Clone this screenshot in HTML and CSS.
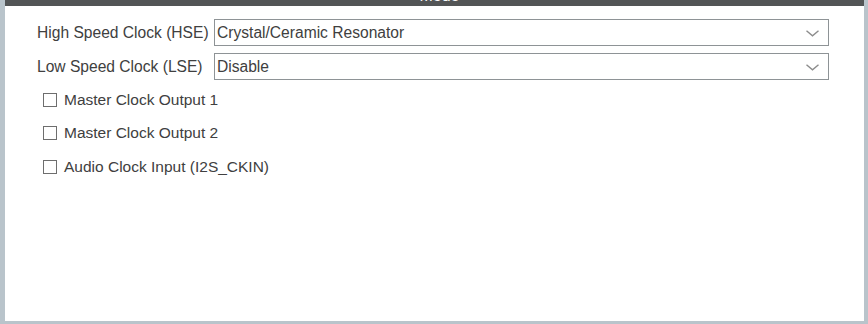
FILE: index.html
```html
<!DOCTYPE html>
<html>
<head>
<meta charset="utf-8">
<link rel="stylesheet" href="styles.css">
</head>
<body>
<div class="frame">
  <div class="panel">
    <div class="titlebar"><span class="title">Mode</span></div>
    <div class="content">
      <div class="fields">
        <div class="field">
          <span class="label">High Speed Clock (HSE)</span>
          <div class="select"><span class="value">Crystal/Ceramic Resonator</span>
            <svg class="chev" width="13" height="7" viewBox="0 0 13 7"><path d="M0.5 0.8 L6.5 5.8 L12.5 0.8" fill="none" stroke="#8c8c8c" stroke-width="1.4"/></svg>
          </div>
        </div>
        <div class="field">
          <span class="label">Low Speed Clock (LSE)</span>
          <div class="select"><span class="value">Disable</span>
            <svg class="chev" width="13" height="7" viewBox="0 0 13 7"><path d="M0.5 0.8 L6.5 5.8 L12.5 0.8" fill="none" stroke="#8c8c8c" stroke-width="1.4"/></svg>
          </div>
        </div>
      </div>
      <div class="checks">
        <label class="check"><span class="box"></span>Master Clock Output 1</label>
        <label class="check"><span class="box"></span>Master Clock Output 2</label>
        <label class="check"><span class="box"></span>Audio Clock Input (I2S_CKIN)</label>
      </div>
    </div>
  </div>
</div>
</body>
</html>
```
FILE: styles.css
```css
html, body { margin: 0; padding: 0; }
body {
  width: 868px;
  height: 324px;
  background: #b9c4cb;
  font-family: "Liberation Sans", Arial, sans-serif;
  overflow: hidden;
}
.frame {
  padding: 0 4px 3px 5px;
  height: 324px;
  box-sizing: border-box;
}
.panel {
  background: #ffffff;
  height: 100%;
}
.titlebar {
  height: 6px;
  background: #535556;
  overflow: hidden;
  display: flex;
  justify-content: center;
}
.title {
  color: #ffffff;
  font-size: 16px;
  line-height: 16px;
  margin-top: -12px;
  margin-left: 10px;
}
.content {
  padding: 13px 0 0 32px;
}
.fields {
  display: flex;
  flex-direction: column;
  gap: 7px;
}
.field {
  display: flex;
  align-items: center;
  height: 27px;
}
.label {
  width: 177px;
  font-size: 15.6px;
  color: #404040;
  white-space: nowrap;
}
.select {
  width: 615px;
  height: 27px;
  box-sizing: border-box;
  border: 1px solid #8e9396;
  display: flex;
  align-items: center;
  justify-content: space-between;
  padding: 0 9px 0 2px;
}
.value {
  font-size: 15.6px;
  color: #404040;
}
.chev { display: block; margin-top: 1px; }
.checks {
  display: flex;
  flex-direction: column;
  padding: 3px 0 0 6px;
}
.check {
  display: flex;
  align-items: center;
  height: 33.5px;
  font-size: 15.5px;
  color: #404040;
}
.box {
  width: 14px;
  height: 14px;
  box-sizing: border-box;
  border: 1px solid #6e6e6e;
  margin-right: 7px;
  background: #fff;
}
```
